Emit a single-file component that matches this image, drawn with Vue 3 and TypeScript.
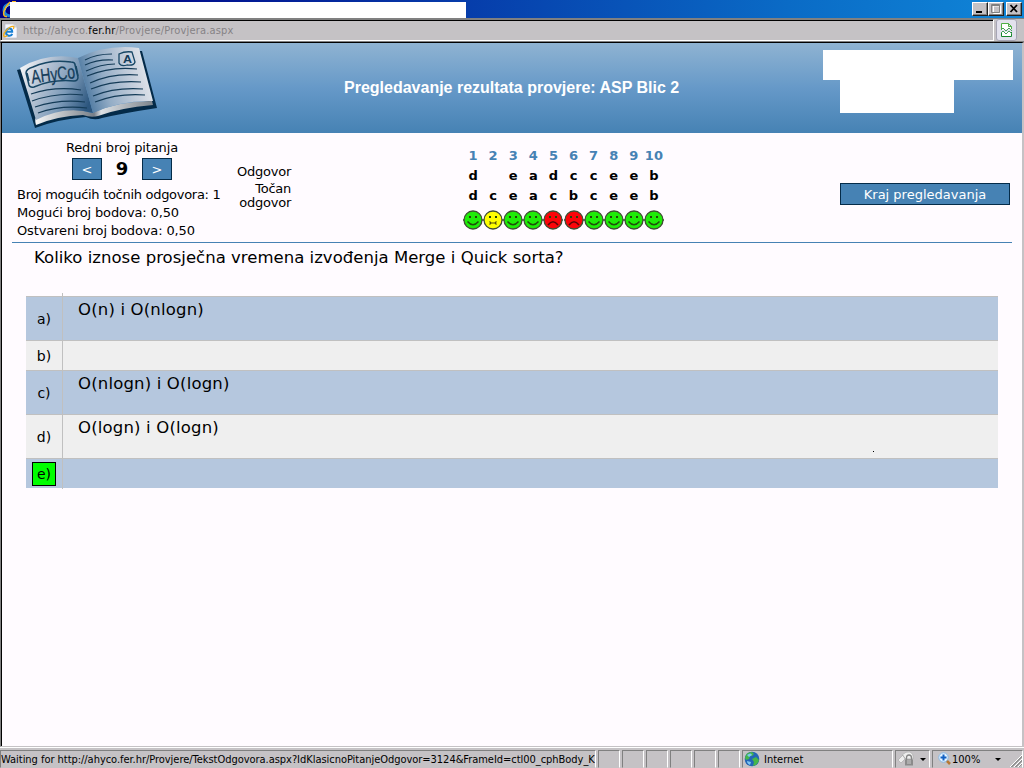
<script setup lang="ts">
type Mood = 'happy' | 'blank' | 'sad'
interface Result { n: number; given: string; correct: string; mood: Mood }
interface Answer { key: string; text: string; tall: boolean; correct?: boolean }

const given = 'd eadcceeb'
const correct = 'dceacbceeb'
const results: Result[] = Array.from({ length: 10 }, (_, i) => ({
  n: i + 1,
  given: given[i].trim(),
  correct: correct[i],
  mood: given[i] === ' ' ? 'blank' : given[i] === correct[i] ? 'happy' : 'sad',
}))
const fills: Record<Mood, string> = { happy: '#1fec08', blank: '#ffff00', sad: '#fb0509' }
const answers: Answer[] = [
  { key: 'a)', text: 'O(n) i O(nlogn)', tall: true },
  { key: 'b)', text: '', tall: false },
  { key: 'c)', text: 'O(nlogn) i O(logn)', tall: true },
  { key: 'd)', text: 'O(logn) i O(logn)', tall: true },
  { key: 'e)', text: '', tall: false, correct: true },
]
</script>

<template>
  <div class="window">
    <div class="titlebar">
      <svg class="title-ie" width="10" height="18" viewBox="0 0 10 18">
        <path d="M10 4Q4 5 4 10T10 16" fill="none" stroke="#1b83d8" stroke-width="3" />
        <path d="M10 5Q6 6 5 10" fill="none" stroke="#8ed6ff" stroke-width="1" />
        <path d="M10 2Q5 7 3.8 12Q3 17 7 16.500" fill="none" stroke="#f7b51c" stroke-width="1.500" />
      </svg>
      <div class="title-mask"></div>
      <svg class="title-tip" width="9" height="2" viewBox="0 0 9 2"><path d="M3 1.500H7" stroke="#f7b51c" /></svg>
      <div class="win-buttons">
        <span class="wbtn"><svg width="14" height="12" viewBox="0 0 14 12"><path d="M3 8h6v2H3z" fill="#000" /></svg></span>
        <span class="wbtn"><svg width="14" height="12" viewBox="0 0 14 12"><path d="M3.500 2v7.500h7V2M3 2h8" fill="none" stroke="#fff" transform="translate(1 1)" /><path d="M2.500 1.500h8v8h-8zM2 2.500h9" fill="none" stroke="#808080" /></svg></span>
        <span class="wbtn close"><svg width="14" height="12" viewBox="0 0 14 12"><path d="M3.500 2L10 9M10 2L3.500 9" stroke="#000" stroke-width="1.800" /></svg></span>
      </div>
    </div>

    <div class="address">
      <div class="address-field">
        <svg class="page-icon" width="16" height="16" viewBox="0 0 16 16">
          <path d="M2 1h9l3 3v11H2z" fill="#f8f8ff" stroke="#b8b8c4" stroke-width=".6" />
          <path d="M11 1v3h3" fill="#ddd" stroke="#aaa" stroke-width=".5" />
          <path d="M3.500 8.800H9.200C9.300 4.300 3.300 4.500 3 9C2.900 13.300 8 14 9.200 10.800" fill="none" stroke="#187fd4" stroke-width="2" />
          <path d="M.8 13.200C-.5 10.500 6.500 2.600 10.200 3.400C11.500 3.800 10.300 6 10.300 6M.8 13.200Q2 14.500 4.500 12.500" fill="none" stroke="#f4ae18" stroke-width="1.200" />
        </svg>
        <span class="url">http://ahyco.<b>fer.hr</b>/Provjere/Provjera.aspx</span>
      </div>
      <div class="compat">
        <svg width="21" height="21" viewBox="0 0 21 21">
          <path d="M5.500 10V3.500h7l3 3V9M12.500 3.500v3h3" fill="#fff" stroke="#4fae45" />
          <path d="M5.500 12v4.500h10V12" fill="#fff" stroke="#16862c" />
          <path d="M5 10l2-2 3 3 3-3 3 3M5 13l2-2 3 3 3-3 3 3" fill="none" stroke="#48a05a" />
        </svg>
      </div>
    </div>

    <div class="page">
      <header class="header">
        <svg class="logo" width="148" height="85" viewBox="0 0 148 85">
          <defs>
            <linearGradient id="leftPage" x1="0" y1="0.200" x2="1" y2=".6">
              <stop offset="0" stop-color="#f4f5f7" /><stop offset=".3" stop-color="#b9c5d5" />
              <stop offset=".65" stop-color="#7d9bb9" /><stop offset="1" stop-color="#2c567e" />
            </linearGradient>
            <linearGradient id="rightPage" x1="0" y1=".6" x2="1" y2=".35">
              <stop offset="0" stop-color="#3f6e99" /><stop offset=".35" stop-color="#94adc6" />
              <stop offset=".75" stop-color="#cbd3df" /><stop offset="1" stop-color="#e8ebef" />
            </linearGradient>
            <linearGradient id="edge" x1="0" y1="0" x2="1" y2="0">
              <stop offset="0" stop-color="#f8f8f8" /><stop offset=".5" stop-color="#777f88" />
              <stop offset=".56" stop-color="#dde1e5" /><stop offset="1" stop-color="#7d858d" />
            </linearGradient>
          </defs>
          <path d="M3 26L7 25L22 73Q50 63 78 71Q106 59 138 57L124 7L128 7L143 64Q110 69 88 74Q80 77 72 73Q45 75 21 84Z" fill="#042b49" />
          <path d="M22 81Q20 74 23 73Q51 61 78 69Q105 57 138 57L139 61Q105 64 84 72Q77 74 69 71Q43 72 22 81Z" fill="url(#edge)" />
          <path d="M6 24Q33 8 64 14L79 69Q51 61 22 76Q14 49 6 24Z" fill="url(#leftPage)" />
          <path d="M64 14Q92 0 125 4L139 57Q107 56 79 69Z" fill="url(#rightPage)" />
          <g fill="none" stroke="#143b57" stroke-width="1.150">
            <path d="M17 50Q41 42 67 46M18 57Q43 48 69 51M21 63Q45 55 71 58M24 69Q46 61 73 64" />
            <path d="M71 16Q82 10 98 10M71 21Q84 15 99 16M72 27Q87 20 101 20M73 32Q97 22 123 25M76 39Q98 29 124 31M77 45Q99 36 127 38M79 52Q101 43 129 45M81 58Q104 49 131 51" />
          </g>
          <path d="M19 23Q36 15 57 18Q61 18 61 21L64 33Q64 37 60 37Q39 35 20 43Q16 44 15 41L12 29Q12 25 19 23Z" fill="none" stroke="#174664" stroke-width="1.500" />
          <path d="M13 29L15 37M62 22L64 32" stroke="#174664" stroke-width="1.500" />
          <text x="18" y="39.500" transform="rotate(-7 18 39.500)" textLength="44" lengthAdjust="spacingAndGlyphs" class="logo-name">AHyCo</text>
          <path d="M105 10Q111 7 118 8L121 18Q120 22 113 21Q107 23 105 19Z" fill="none" stroke="#174664" stroke-width="1.300" />
          <text x="109" y="19" textLength="9" lengthAdjust="spacingAndGlyphs" class="logo-a">A</text>
        </svg>
        <h1>Pregledavanje rezultata provjere: ASP Blic 2</h1>
        <div class="redacted"><i class="wide"></i><i class="narrow"></i></div>
      </header>

      <section class="summary">
        <div class="nav">
          <div class="nav-title">Redni broj pitanja</div>
          <div class="nav-row"><button>&lt;</button><strong>9</strong><button>&gt;</button></div>
          <div class="stats">
            <div class="possible">Broj mogućih točnih odgovora: 1</div>
            <div>Mogući broj bodova: 0,50</div>
            <div>Ostvareni broj bodova: 0,50</div>
          </div>
        </div>
        <div class="legend"><div class="given">Odgovor</div><div>Točan</div><div>odgovor</div></div>
        <div class="results">
          <div v-for="r in results" :key="r.n" class="result">
            <span class="num">{{ r.n }}</span>
            <span>{{ r.given }}</span>
            <span>{{ r.correct }}</span>
            <svg width="20" height="20" viewBox="0 0 20 20">
              <path d="M0 10h20" stroke="#777" stroke-width="2" />
              <circle cx="10" cy="10" r="9" :fill="fills[r.mood]" stroke="#3f4d32" stroke-width="1.300" />
              <path d="M6 6h2v2H6zM12 6h2v2h-2z" fill="#234409" />
              <path v-if="r.mood === 'happy'" d="M4.500 11.500Q10 18 15.500 11.500" fill="none" stroke="#20500c" stroke-width="1.500" />
              <path v-else-if="r.mood === 'sad'" d="M5 15Q10 8.500 15 15" fill="none" stroke="#5a0505" stroke-width="1.500" />
              <path v-else d="M6.500 11.500l1.500 1.500h4l1.500-1.500M6.500 14.500L8 13M13.500 14.500L12 13" fill="none" stroke="#55530c" stroke-width="1.200" />
            </svg>
          </div>
        </div>
        <button class="finish"><span>Kraj pregledavanja</span></button>
      </section>

      <main>
        <p class="question">Koliko iznose prosječna vremena izvođenja Merge i Quick sorta?</p>
        <div class="answers">
          <div v-for="a in answers" :key="a.key" class="answer" :class="{ tall: a.tall }">
            <div class="key"><span :class="{ correct: a.correct }">{{ a.key }}</span></div>
            <div class="text"><span>{{ a.text }}</span><i v-if="a.key === 'd)'" class="speck"></i></div>
          </div>
        </div>
      </main>
    </div>

    <footer class="status">
      <div class="pane message"><span>Waiting for http://ahyco.fer.hr/Provjere/TekstOdgovora.aspx?IdKlasicnoPitanjeOdgovor=3124&amp;FrameId=ctl00_cphBody_K</span></div>
      <div v-for="i in 6" :key="i" class="pane small"></div>
      <div class="pane zone">
        <svg width="16" height="16" viewBox="0 0 16 16">
          <circle cx="8" cy="8" r="7.300" fill="#2366b6" />
          <path d="M1 7Q2 1 8 1L10 3L8 5L6 5L5 8L2 9ZM8 8L12 6L15 9Q14 14 9 15L10 11Z" fill="#45b649" />
          <path d="M3 4Q7 1 8 4L5 6M3 10L7 11L6 14Q3 13 3 10" fill="#7dc6f3" />
        </svg>
        <span>Internet</span>
      </div>
      <div class="pane lock">
        <svg width="18" height="16" viewBox="0 0 18 16">
          <path d="M0 9L5 4L7 8L3 12ZM4 4Q8 0 12 1Q16 3 15 8H8Z" fill="#eee" stroke="#aaa" stroke-width=".7" />
          <path d="M8.500 9V7Q8.500 4 11 4T13.500 7V9" fill="none" stroke="#858585" stroke-width="1.300" />
          <path d="M7 8.500h8v6H7z" fill="#8b8b8b" /><path d="M9 10h4M9 12h4" stroke="#ccc" />
        </svg>
        <i class="arrow"></i>
      </div>
      <div class="pane zoom">
        <svg width="14" height="14" viewBox="0 0 14 14">
          <path d="M8 8L12 12" stroke="#b87832" stroke-width="2.500" />
          <circle cx="5.500" cy="5.500" r="4.700" fill="#e5f3ff" stroke="#85b8e7" />
          <path d="M5.500 2.500v6M2.500 5.500h6" stroke="#1262c4" stroke-width="2" />
        </svg>
        <span>100%</span><i class="arrow"></i>
        <svg class="grip" width="13" height="13" viewBox="0 0 13 13"><path d="M1 13L13 1M5 13L13 5M9 13L13 9" stroke="#fff" stroke-width="1" /><path d="M2 13L13 2M3 13L13 3M6 13L13 6M7 13L13 7M10 13L13 10" stroke="#858585" stroke-width=".8" /></svg>
      </div>
    </footer>
  </div>
</template>

<style>
html, body { margin: 0; overflow: hidden; }
</style>

<style scoped>
* { box-sizing: border-box; }
.window { width: 1024px; height: 768px; display: flex; flex-direction: column; background: #c5c2c5; font-family: Verdana, "DejaVu Sans", sans-serif; color: #000; overflow: hidden; white-space: nowrap; }
svg { flex: none; display: block; }
.titlebar { position: relative; height: 18px; flex: none; display: flex; background: linear-gradient(90deg, #000080 0%, #000084 8%, #063caa 45%, #0a6bc6 77%, #1086d8 100%); }
.title-ie { width: 10px; }
.title-mask { width: 456px; height: 16px; margin-top: 2px; background: #fff; }
.title-tip { position: absolute; left: 9px; top: 0; }
.win-buttons { margin-left: auto; display: flex; padding: 2px 2px 0 0; }
.wbtn { width: 16px; height: 14px; border: 1px solid; border-color: #fff #222 #222 #fff; box-shadow: inset -1px -1px #808080; background: #c5c2c5; }
.wbtn.close { margin-left: 2px; }
.address { height: 24px; flex: none; display: flex; border-top: 1px solid #808080; border-bottom: 1px solid #808080; }
.address-field { width: 994px; border-top: 1px solid #808080; border-left: 1px solid #808080; border-right: 1px solid #fff; border-bottom: 1px solid #fff; box-shadow: inset 1px 1px #000; display: flex; align-items: center; padding: 1px 0 0 2px; }
.url { margin-left: 4px; font: 11px "DejaVu Sans Condensed", "DejaVu Sans", sans-serif; color: #858285; letter-spacing: .18px; }
.url b { color: #000; font-weight: 400; }
.compat { width: 21px; height: 22px; margin-left: 2px; border: 1px solid #a6a5b5; border-radius: 3px; background: #e2e1ed; display: flex; align-items: center; justify-content: center; }
.page { height: 705px; flex: none; border: solid; border-width: 1px 2px 1px 1px; border-color: #000 #c5c2c5 #c5c2c5 #808080; background: #fffbff; box-shadow: inset 1px 0 #000; padding-left: 1px; }
.header { height: 90px; display: flex; background: linear-gradient(#8fb3d2 0, #6699c8 50%, #4682b4 100%); }
.logo { margin: 1px 0 0 12px; }
.logo-name { font: 19px "Liberation Sans", sans-serif; fill: #143c59; stroke: #143c59; stroke-width: .3px; }
.logo-a { font: bold 11px "Liberation Sans", sans-serif; fill: #143c59; }
h1 { margin: 35px 0 0 182px; width: 336px; font: bold 16px/20px "Liberation Sans", Arial, sans-serif; color: #fff; }
.redacted { margin: 7px 9px 0 auto; width: 190px; }
.redacted i { display: block; background: #fff; }
.redacted .wide { height: 30px; }
.redacted .narrow { width: 114px; height: 33px; margin-left: 17px; }
.summary { height: 110px; margin: 0 10px; display: flex; border-bottom: 1px solid #4682b4; font-size: 13px; }
.nav { width: 220px; padding-top: 5px; }
.nav-title { height: 20px; line-height: 20px; text-align: center; letter-spacing: -.13px; }
.nav-row { display: flex; align-items: center; justify-content: center; }
button { font-family: inherit; font-size: 13px; color: #fff; background: #4682b4; border: 1px solid #042b49; padding: 0; height: 22px; }
.nav-row button { width: 30px; }
.nav-row strong { width: 40px; text-align: center; font-size: 18px; line-height: 22px; }
.stats { margin-top: 6px; padding-left: 5px; line-height: 18px; letter-spacing: -.13px; }
.stats .possible { letter-spacing: -.29px; }
.legend { width: 59px; padding-top: 29px; text-align: right; line-height: 14px; letter-spacing: -.25px; }
.legend .given { line-height: 20px; }
.results { display: flex; margin-left: 172px; padding-top: 13px; }
.result { width: 20.100px; display: flex; flex-direction: column; align-items: center; font-weight: 700; line-height: 20px; }
.result span { height: 20px; }
.result svg { margin-top: 4px; }
.num { color: #4682b4; }
.finish { width: 170px; margin: 50px 2px 0 auto; }
.question { margin: 0; padding: 5px 0 0 32px; height: 50px; line-height: 20px; font-size: 16.500px; letter-spacing: .02px; }
.answers { position: relative; margin: 0 24px 0 24px; height: 196px; padding-top: 3px; }
.answers::before { content: ""; position: absolute; left: 36px; top: 0; width: 1px; height: 196px; background: #c0c0c0; z-index: 1; }
.answer { height: 30px; display: flex; background: #efefef; border-top: 1px solid #c0c0c0; }
.answer.tall { height: 44px; }
.answer:nth-child(odd) { background: #b5c7de; }
.key { width: 36px; display: flex; align-items: center; justify-content: center; font-size: 14px; }
.key span { width: 24px; height: 24px; line-height: 24px; text-align: center; }
.key .correct { background: #0f0; border: 1px solid #000; line-height: 22px; }
.text { position: relative; flex: 1; padding-left: 16px; padding-top: 3px; font-size: 16.500px; line-height: 20px; letter-spacing: .17px; }
.speck { position: absolute; left: 811px; top: 36px; width: 1px; height: 1px; background: #000; }
.status { height: 21px; flex: none; display: flex; padding-top: 2px; border-top: 1px solid #fff; font: 11px "DejaVu Sans Condensed", "DejaVu Sans", sans-serif; }
.pane { height: 18px; flex: none; border: 1px solid; border-color: #808080 #fff #c5c2c5 #808080; margin-right: 2px; display: flex; align-items: center; overflow: hidden; }
.message { width: 596px; letter-spacing: -.035px; }
.small { width: 22px; }
.zone { width: 151px; padding-left: 1px; }
.zone span { margin-left: 4px; }
.lock { width: 35px; padding-left: 2px; }
.arrow { width: 0; height: 0; border: 3px solid transparent; border-top-color: #000; border-bottom: 0; margin-left: 4px; }
.zoom { width: 91px; margin-right: 0; padding-left: 5px; }
.zoom .arrow { margin-left: 15px; }
.grip { margin-left: auto; align-self: flex-end; }
</style>
